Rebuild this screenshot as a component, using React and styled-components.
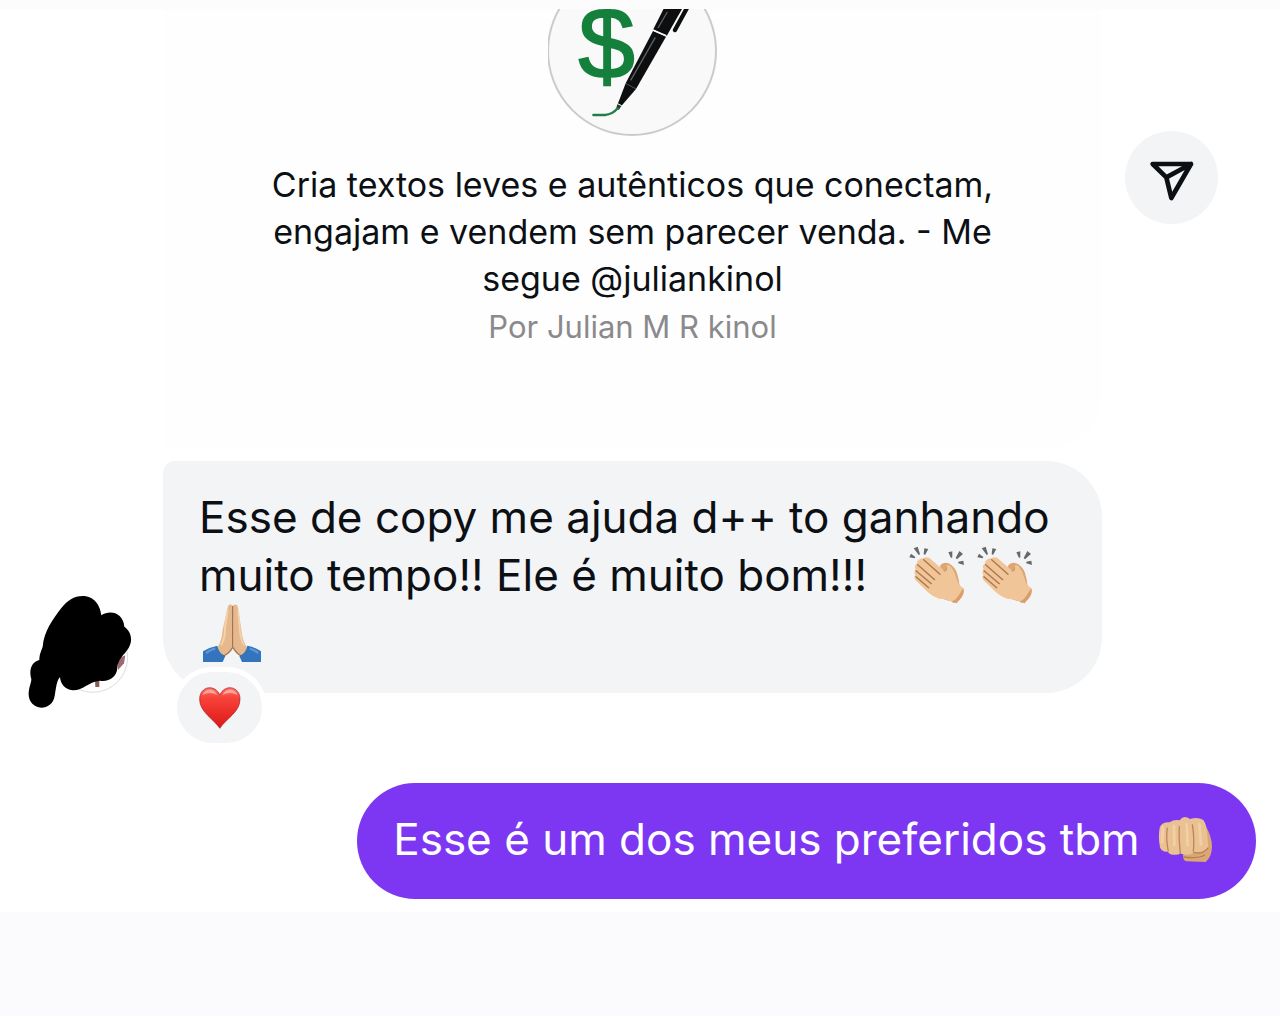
import React from "react";
import styled, { createGlobalStyle } from "styled-components";

function App() {
  return (
    <>
      <GlobalStyle />
      <StPage>
        <StTopEdge />
        <StChat>
          <StRow>
            <span />
            <StCard>
              <ProfileLogo />
              <StCardText>
                Cria textos leves e autênticos que conectam, engajam e vendem
                sem parecer venda. - Me segue @juliankinol
              </StCardText>
              <StCardAuthor>Por Julian M R kinol</StCardAuthor>
            </StCard>
            <StShareBtn type="button" aria-label="Enviar">
              <SendIcon />
            </StShareBtn>
          </StRow>

          <StRow>
            <StAvatar>
              <AvatarDrawing />
            </StAvatar>
            <StIncoming>
              Esse de copy me ajuda d++ to ganhando muito tempo!! Ele é muito
              bom!!!&nbsp;&nbsp; <Clap />
              <Clap />
              <Pray />
              <StReaction type="button" aria-label="Curtida">
                <Heart />
              </StReaction>
            </StIncoming>
          </StRow>

          <StOutgoing>
            Esse é um dos meus preferidos tbm <Fist />
          </StOutgoing>
        </StChat>
      </StPage>
    </>
  );
}

export default App;

function ProfileLogo() {
  return (
    <StLogo viewBox="54 27 510 384">
      <circle cx="306" cy="153" r="252" fill="#f9f9f9" stroke="#cbcbcb" strokeWidth="6" />
      <text
        x="230"
        y="235"
        textAnchor="middle"
        fontFamily="Liberation Sans, Arial, sans-serif"
        fontSize="306"
        fill="#14803c"
        stroke="#14803c"
        strokeWidth="5"
      >
        $
      </text>
      <path d="M404 20 L460 20 L410 108 L370 88Z" fill="#0c0e10" />
      <path d="M472 22 L435 90" stroke="#0c0e10" strokeWidth="13" strokeLinecap="round" />
      <path d="M369 93 L408 110 L318 267 L287 250Z" fill="#0c0e10" />
      <path d="M287 250 L318 267 L274 318 L263 313Z" fill="#0c0e10" />
      <path d="M371 91 L409 107" stroke="#f9f9f9" strokeWidth="4" />
      <path d="M412 36 L384 84 M376 112 L302 241" stroke="#5d6163" strokeWidth="4" />
      <path d="M289 252 L316 265" stroke="#555" strokeWidth="2" />
      <path d="M262 313 L274 318 L267 329 L258 328Z" fill="#143f29" />
      <path d="M263 311 L275 317" stroke="#f9f9f9" strokeWidth="3" />
      <path
        d="M263 325 Q248 343 225 345 L190 345"
        fill="none"
        stroke="#247b4b"
        strokeWidth="7"
        strokeLinecap="round"
      />
    </StLogo>
  );
}

function SendIcon() {
  return (
    <svg width="46" height="44" viewBox="115 122 138 132" fill="none">
      <path
        d="M126 134 H241 L182 236 L167 174Z M167 174 L241 134"
        stroke="#0c1014"
        strokeWidth="14"
        strokeLinejoin="round"
        strokeLinecap="round"
      />
    </svg>
  );
}

function AvatarDrawing() {
  return (
    <svg width="104" height="114" viewBox="84 45 312 342">
      <circle cx="278" cy="232" r="105" fill="#fff" stroke="#dcdcdc" strokeWidth="3" />
      <path d="M354 236 L376 226 L372 250 L354 270Z" fill="#9b6a72" />
      <path d="M285 298 H298 V321 H286Z" fill="#8a5a58" />
      <path
        d="M248 48 C284 48 301 78 304 106 C330 88 370 98 373 140 C396 156 398 184 386 204 C372 226 354 236 352 264 C350 292 326 306 300 302 C262 306 250 332 218 331 C194 328 182 312 180 292 C170 300 168 326 164 348 C160 372 142 383 124 383 C102 382 84 364 86 338 C88 318 94 308 94 298 C86 270 94 246 118 240 C118 222 124 212 128 200 C132 154 158 118 184 84 C202 62 222 48 248 48Z"
        fill="#000"
      />
    </svg>
  );
}

function Clap() {
  return (
    <StEmoji viewBox="57 45 174 174" role="img" aria-label="aplausos">
      <g fill="#66696c">
        <path d="M74 52 L86 47 L93 70 L89 72Z" />
        <path d="M106 52 L118 54 L108 72 L104 69Z" />
        <path d="M66 68 L79 78 L77 82 L61 79Z" />
        <path d="M178 64 L190 61 L190 79 L186 81Z" />
        <path d="M211 60 L222 69 L204 85 L200 81Z" />
        <path d="M208 92 L223 89 L225 102 L208 97Z" />
      </g>
      <path
        d="M154 103 Q162 92 178 97 Q196 105 204 126 Q210 145 212 166 L190 180 L150 130Z"
        fill="#dda774"
      />
      <path d="M150 190 Q160 208 186 210 L204 217 L214 196Z" fill="#d49a68" />
      <path
        d="M103 82 Q112 75 122 82 L164 118 Q172 122 172 110 Q173 98 183 104 Q196 118 202 140 Q206 160 223 172 Q228 188 212 206 Q200 220 188 212 Q174 204 150 203 Q132 198 116 183 L80 148 Q73 139 79 132 Q73 123 80 116 Q74 102 83 99 Q84 84 103 82Z"
        fill="#f0c597"
      />
      <path
        d="M104 86 L153 130 M86 101 L137 146 M81 119 L127 158 M81 137 L119 170"
        fill="none"
        stroke="#ad754c"
        strokeWidth="4"
        strokeLinecap="round"
      />
      <path
        d="M223 172 Q228 188 212 206 Q200 220 188 212 Q202 206 208 194Z"
        fill="#d99e69"
      />
      <path
        d="M164 119 Q175 124 172 108"
        fill="none"
        stroke="#c99060"
        strokeWidth="3"
      />
    </StEmoji>
  );
}

function Pray() {
  return (
    <StEmoji viewBox="137 42 174 174" role="img" aria-label="mãos juntas">
      <path
        d="M225 45 Q214 39 211 53 L196 119 Q194 149 180 174 L194 202 Q216 188 225 171Z"
        fill="#e5b98d"
      />
      <path
        d="M228 45 Q239 39 242 53 L252 119 Q254 149 270 174 L256 202 Q236 188 228 171Z"
        fill="#e5b98d"
      />
      <path
        d="M211 60 L203 112 Q205 140 191 166"
        fill="none"
        stroke="#f4d2aa"
        strokeWidth="6"
      />
      <path
        d="M242 60 L247 112 Q247 140 260 166"
        fill="none"
        stroke="#f4d2aa"
        strokeWidth="5"
      />
      <path
        d="M226 48 L226 172 M226 172 Q216 190 198 198 M227 172 Q237 190 252 198"
        fill="none"
        stroke="#a87450"
        strokeWidth="4"
      />
      <path d="M137 184 Q158 171 180 167 Q184 190 204 198 L196 216 H137Z" fill="#3474bd" />
      <path d="M311 184 Q292 171 270 167 Q266 190 246 198 L254 216 H311Z" fill="#3474bd" />
      <path
        d="M146 189 Q162 178 174 176 M303 189 Q287 178 277 176"
        stroke="#5a96d8"
        strokeWidth="7"
        fill="none"
      />
    </StEmoji>
  );
}

function Fist() {
  return (
    <StEmoji viewBox="81 105 174 174" role="img" aria-label="soco">
      <path
        d="M228 150 Q249 184 249 216 Q248 245 230 261 L172 259 Q162 257 162 240 L190 222Z"
        fill="#d9a674"
      />
      <path
        d="M92 158 Q98 141 122 142 Q136 132 152 136 Q164 119 183 132 Q206 124 223 135 Q233 148 235 180 L238 216 Q234 234 214 235 Q202 238 194 231 Q188 240 172 239 Q160 240 154 235 Q148 241 132 239 Q120 238 117 230 Q98 232 93 217 Q87 187 92 158Z"
        fill="#e9c193"
      />
      <path
        d="M115 158 Q110 190 118 229 M151 154 Q149 190 154 234 M190 148 Q197 190 193 230"
        fill="none"
        stroke="#bd8759"
        strokeWidth="4"
      />
      <path
        d="M102 156 L99 203 M135 153 L136 210 M173 147 L176 211 M211 147 L216 208"
        fill="none"
        stroke="#f2d0a4"
        strokeWidth="8"
        strokeLinecap="round"
      />
      <path
        d="M194 232 Q222 240 238 218 M164 246 Q206 252 228 240"
        fill="none"
        stroke="#b77e51"
        strokeWidth="4"
      />
    </StEmoji>
  );
}

function Heart() {
  return (
    <svg width="42" height="42" viewBox="133 289 125 125">
      <defs>
        <linearGradient id="heart" x1="0" y1="0" x2="0" y2="1">
          <stop offset="0" stopColor="#ff6d65" />
          <stop offset="0.25" stopColor="#f7433a" />
          <stop offset="1" stopColor="#dc1717" />
        </linearGradient>
      </defs>
      <path
        d="M195 412 C178 385 134 363 135 325 C135 286 181 279 195 313 C209 279 255 286 255 325 C256 363 212 385 195 412Z"
        fill="url(#heart)"
        stroke="#a92020"
        strokeWidth="2"
      />
      <path
        d="M143 313 Q152 294 170 297 Q182 300 187 313 Q166 301 143 313Z M203 313 Q208 300 221 297 Q239 294 248 313 Q225 301 203 313Z"
        fill="#ffb7ad"
        opacity="0.8"
      />
    </svg>
  );
}

const GlobalStyle = createGlobalStyle`
  * {
    box-sizing: border-box;
  }

  body {
    margin: 0;
    background-color: #fbfbfe;
    font-family: Inter, "Noto Sans", sans-serif;
    color: #0c1014;
  }
`;

const StPage = styled.div`
  min-height: 100vh;
  background-color: #fbfbfe;
`;

const StTopEdge = styled.div`
  height: 9px;
  background-color: #fcfcfc;
`;

const StChat = styled.main`
  display: flex;
  flex-direction: column;
  padding-bottom: 13px;
  background-color: #fff;
`;

const StRow = styled.div`
  display: grid;
  grid-template-columns: 163px minmax(0, 1fr) 178px;
`;

const StCard = styled.section`
  display: flex;
  flex-direction: column;
  align-items: center;
  height: 440px;
  margin-bottom: 12px;
  padding: 0 100px;
  border-radius: 0 0 56px 12px;
  background-color: #fefefe;
  text-align: center;
`;

const StLogo = styled.svg`
  width: 170px;
  height: 128px;
  flex-shrink: 0;
`;

const StCardText = styled.p`
  margin: 24px 0 0;
  font-size: 34px;
  line-height: 47px;
`;

const StCardAuthor = styled.p`
  margin: 0;
  font-size: 31px;
  line-height: 50px;
  color: #8a8a8c;
`;

const StShareBtn = styled.button`
  display: flex;
  align-items: center;
  justify-content: center;
  width: 93px;
  height: 93px;
  margin: 122px 0 0 23px;
  padding: 8px 0 0;
  border: none;
  border-radius: 50%;
  background-color: #f3f4f6;
  cursor: pointer;
`;

const StAvatar = styled.div`
  display: flex;
  align-self: end;
  margin: 0 0 34px 28px;
`;

const StBubble = styled.div`
  padding: 27px 36px 31px;
  font-size: 44px;
  line-height: 58px;
`;

const StIncoming = styled(StBubble)`
  position: relative;
  margin-bottom: 50px;
  border-radius: 12px 56px 56px 56px;
  background-color: #f3f4f6;
`;

const StOutgoing = styled(StBubble)`
  align-self: flex-end;
  margin: 40px 24px 0;
  border-radius: 58px;
  background-color: #7d37f3;
  color: #fff;
`;

const StEmoji = styled.svg`
  width: 58px;
  height: 58px;
  margin: 0 6px 0 4px;
  vertical-align: top;
`;

/* hangs over the lower left corner of the bubble */
const StReaction = styled.button`
  position: absolute;
  left: 9px;
  bottom: -55px;
  display: flex;
  align-items: center;
  justify-content: center;
  width: 95px;
  height: 81px;
  padding: 0;
  border: 5px solid #fff;
  border-radius: 41px;
  background-color: #f3f4f6;
  cursor: pointer;
`;
